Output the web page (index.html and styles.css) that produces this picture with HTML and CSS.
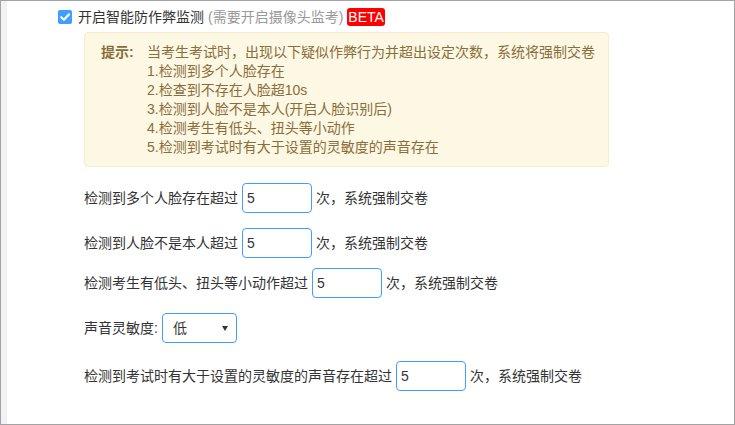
FILE: index.html
```html
<!DOCTYPE html>
<html lang="zh-CN">
<head>
<meta charset="utf-8">
<link rel="stylesheet" href="styles.css">
</head>
<body>
<div class="frame">
  <div class="strip"></div>
  <div class="content">
    <div class="header">
      <span class="checkbox">
        <svg width="14" height="14" viewBox="0 0 14 14"><path d="M3.2 7.2 L5.9 9.8 L10.9 4.4" fill="none" stroke="#fff" stroke-width="2.2" stroke-linecap="round" stroke-linejoin="round"/></svg>
      </span>
      <span class="title">开启智能防作弊监测</span>
      <span class="muted">(需要开启摄像头监考)</span>
      <span class="badge">BETA</span>
    </div>
    <div class="body">
      <div class="tip">
        <div class="tip-label">提示:</div>
        <div class="tip-text">
          <div>当考生考试时，出现以下疑似作弊行为并超出设定次数，系统将强制交卷</div>
          <div>1.检测到多个人脸存在</div>
          <div>2.检查到不存在人脸超10s</div>
          <div>3.检测到人脸不是本人(开启人脸识别后)</div>
          <div>4.检测考生有低头、扭头等小动作</div>
          <div>5.检测到考试时有大于设置的灵敏度的声音存在</div>
        </div>
      </div>
      <div class="row r1">
        <span>检测到多个人脸存在超过</span>
        <input class="num" type="text" value="5">
        <span>次，系统强制交卷</span>
      </div>
      <div class="row r2">
        <span>检测到人脸不是本人超过</span>
        <input class="num" type="text" value="5">
        <span>次，系统强制交卷</span>
      </div>
      <div class="row r3">
        <span>检测考生有低头、扭头等小动作超过</span>
        <input class="num" type="text" value="5">
        <span>次，系统强制交卷</span>
      </div>
      <div class="row r4">
        <span>声音灵敏度:</span>
        <div class="select-wrap">
          <select class="sel">
            <option>低</option>
            <option>中</option>
            <option>高</option>
          </select>
          <span class="caret"></span>
        </div>
      </div>
      <div class="row r5">
        <span>检测到考试时有大于设置的灵敏度的声音存在超过</span>
        <input class="num" type="text" value="5">
        <span>次，系统强制交卷</span>
      </div>
    </div>
  </div>
</div>
</body>
</html>
```
FILE: styles.css
```css
* { box-sizing: border-box; }
html, body { margin: 0; padding: 0; background: #fff; }
body {
  font-family: "Liberation Sans", "Noto Sans CJK SC", sans-serif;
  font-size: 14px;
  color: #333;
}
.frame {
  width: 735px;
  height: 425px;
  border: 1px solid #a3a3a3;
  display: flex;
  background: #fff;
}
.strip {
  width: 6px;
  background: #f0f2f6;
}
.content {
  flex: 1;
  padding-top: 6px;
}
.header {
  display: flex;
  align-items: center;
  height: 20px;
  line-height: 20px;
  padding-left: 51px;
}
.checkbox {
  width: 14px;
  height: 14px;
  border-radius: 2px;
  background: #409eff;
  display: inline-flex;
  margin-right: 6px;
}
.checkbox svg { display: block; }
.title { color: #333; }
.muted { color: #999; margin-left: 4px; }
.badge {
  margin-left: 4px;
  background: #f00;
  color: #fff;
  border-radius: 3px;
  padding: 0 1px;
  height: 18px;
  line-height: 18px;
  font-size: 14px;
}
.body {
  margin-left: 77px;
}
.tip {
  margin-top: 5px;
  width: 525px;
  background: #fcf8e3;
  border: 1px solid #faebcc;
  border-radius: 4px;
  color: #8a6d3b;
  padding: 10px 10px 9px 16px;
  display: flex;
  line-height: 19px;
}
.tip-label {
  width: 46px;
  font-weight: bold;
  flex: none;
}
.tip-text { flex: 1; }
.row {
  display: flex;
  align-items: center;
  gap: 4px;
  height: 30px;
  line-height: 20px;
}
.r1 { margin-top: 16px; }
.r2 { margin-top: 15px; }
.r3 { margin-top: 10px; }
.r4 { margin-top: 15px; }
.r5 { margin-top: 18px; }
.num {
  width: 70px;
  height: 30px;
  border: 1px solid #409eff;
  border-radius: 4px;
  padding: 0 4px;
  font-family: "Liberation Sans", "Noto Sans CJK SC", sans-serif;
  font-size: 14px;
  color: #333;
  outline: none;
  background: #fff;
}
.select-wrap {
  position: relative;
  width: 75px;
  height: 30px;
}
.sel {
  appearance: none;
  -webkit-appearance: none;
  width: 75px;
  height: 30px;
  border: 1px solid #409eff;
  border-radius: 4px;
  padding: 0 10px;
  font-family: "Liberation Sans", "Noto Sans CJK SC", sans-serif;
  font-size: 14px;
  color: #333;
  background: #fff;
  outline: none;
}
.caret {
  position: absolute;
  right: 9px;
  top: 13px;
  width: 0;
  height: 0;
  border-left: 3.5px solid transparent;
  border-right: 3.5px solid transparent;
  border-top: 5px solid #333;
  pointer-events: none;
}
```
